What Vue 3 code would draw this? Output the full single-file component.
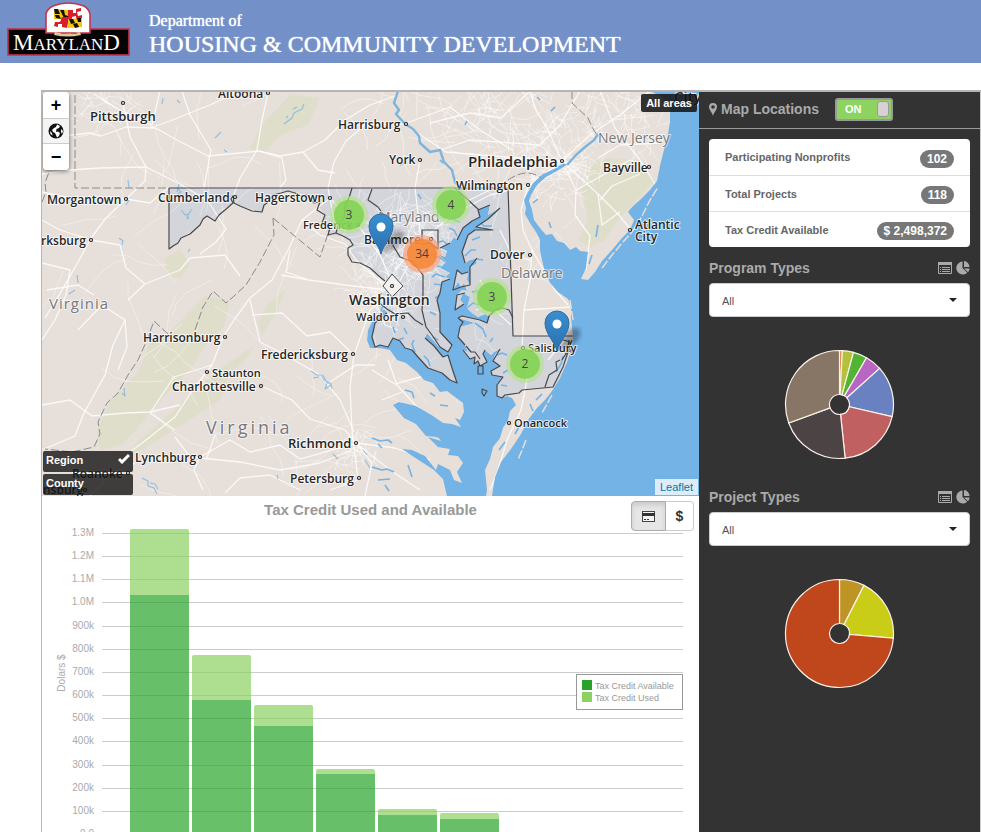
<script setup>
import { ref } from 'vue'

const land =
  'M42 91H650L662 97 670 108 670 122 668 134 664 150 660 166 657 181 650 190 640 200 632 207 628 212 634 220 630 230 622 238 612 250 602 261 595 272 588 280 581 279 586 268 588 252 580 251 576 247 570 250 564 243 557 241 552 234 546 235 540 228 534 220 532 210 529 201 531 195 537 185 546 177 557 171 567 165 L564 163 554 169 543 174 533 183 527 194 524 200 526 208 525 214 530 223 536 232 540 240 540 250 542 260 545 272 550 283 558 292 568 299 571 306 571 318 573 337 572 347 567 362 560 378 552 391 545 400 537 408 528 420 521 434 511 449 501 462 495 477 492 496H486L487 490 485 470 490 459 493 447 500 438 503 428 508 420 510 411 516 405 512 398 507 396 502 398 497 396 497 385 503 377 492 375 491 371 500 366 493 361 495 355 500 349 494 352 491 355 485 350 483 354 487 362 480 366 478 361 474 364 475 357 470 359 463 350 468 352 465 345 458 337 460 327 475 323 458 318 462 316 480 320 487 323 490 317 485 314 478 317 472 313 467 308 470 297 463 293 460 300 464 304 455 310 457 295 462 290 467 291 464 283 461 287 458 282 453 290 457 270 462 274 468 272 467 280 470 285 470 267 476 264 477 258 483 257 470 260 465 263 462 252 468 235 475 230 493 230 476 227 488 219 500 208 488 215 490 205 478 210 480 217 472 221 463 228 457 240 454 237 459 230 450 243 440 248 447 251 445 257 438 254 446 262 440 268 450 273 445 277 450 279 442 282 440 293 437 300 440 313 440 332 452 345 448 352 438 346 427 333 425 338 434 346 443 357 448 355 452 368 457 383 450 380 442 373 428 368 418 357 412 350 405 348 400 341 393 338 388 347 380 345 375 347 372 337 375 323 387 313 384 309 374 318 368 330 367 340 370 348 380 348 390 350 397 360 406 363 417 372 424 380 433 383 440 392 447 391 463 403 464 412 460 420 455 418 461 427 452 424 443 423 433 416 416 406 399 402 393 405 404 418 416 424 426 436 438 437 441 441 428 437 438 447 450 449 448 455 458 456 463 463 457 472 462 483 454 480 450 470 438 464 436 470 425 456 412 450 402 449 417 459 434 470 443 479 447 496H42Z'

const maryland =
  'M169 188H508L513 336H573L568 357 560 378 554 388 520 390 519 393 505 395 498 400 457 388 437 378 418 366 405 354 390 348 370 347 366 335 374 317 378 310 375 302 381 293 386 282 378 275 370 268 360 263 349 256 353 245 343 236 330 235 323 225 325 215 320 208 317 200 307 195 288 191 281 193 273 195 267 203 262 212 240 206 235 201 225 210 215 221 207 216 200 225 185 235 178 243 170 249Z'

const borders = [
  'M169 188H508L513 336H573M169 188V249L173 246 178 243 181 238 190 234 200 225 203 219 207 216 215 221 219 215 225 210 233 203 231 199 233 196 234 203 240 206 252 211 262 212 264 205 267 203 273 195 281 193 288 191 295 193 301 196 307 195 314 203 320 202 317 210 325 215 322 223 330 228 328 235 336 233 343 236 350 240 353 245 348 248 348 255 352 262 360 263 370 268 380 277 385 281',
  'M352 188L349 198 345 205 344 218 338 226 336 233M372 189L368 200 378 207 385 217 387 230 391 242 400 257 413 262 423 275 423 293 422 310 426 327 432 335 440 347',
  'M455 188L479 210M381 293L378 302 387 309 395 314 408 313 415 320 423 325M387 313L375 323 372 337 375 347 380 345 388 347 393 338 400 341 405 348 412 350 418 357 428 368 442 373 450 380 457 383 452 368 448 355 443 357 434 346 425 338',
  'M440 347L448 352 452 345 440 332 440 313 437 300 440 293 442 282 450 279',
  'M500 208L488 219 476 227 493 230H475L468 235 462 252 465 263M490 205L478 210 480 217 472 221 463 228 457 240M450 243L440 248M477 258L470 267V285L461 287 453 290 457 270 462 274 468 272',
  'M465 293L457 295 455 310 464 304M458 318L462 316 480 320 487 323 489 316 495 310 503 308 509 310 513 318M458 318L463 322 460 327 458 337 465 345',
  'M463 350L470 359 475 357 474 364 478 361 480 366 487 362 483 354 485 350 M500 349L493 361 500 366 491 371 492 375 503 377 497 385 497 396 502 398 505 395 519 393 522 390 553 387 563 367 572 340M478 366H483V374H478ZM482 389l5 2-3 5-2-3ZM545 387L549 375 557 370 556 362 560 360M563 340l8 2-5 5 7 3-8 3M466 346l5 6 4 0 5 7M569 340l-2 12-5 8',
  'M422 244V230H438V249L430 243Z'
]

const stateLines = [
  'M75 95V188H169',
  'M42 202L46 192 45 183 49 172M273 218L320 257 330 228M273 218L274 235 260 262 246 285 233 297 226 303 213 291 203 307 195 330',
  'M168 334L154 321 147 340 138 360 128 375 118 393 107 403 98 422 100 434 94 447 72 452 45 449',
  'M572 91L572 103 588 118 592 127 598 137M508 180Q527 167 541 178'
]

const parks = [
  'M205 296L230 300 224 327 205 345 190 370 166 394 148 416 123 444 100 450 97 430 110 402 138 372 150 342 165 337Z',
  'M255 345L245 360 230 375 220 400 180 426 150 445 120 463 140 440 170 414 190 395 215 372Z',
  'M285 290L275 315 262 335 258 322 268 304Z',
  'M588 165L608 158 630 160 655 180 640 197 618 220 605 240 590 248 578 240 588 220 582 190Z',
  'M164 258l16-8 10 14-10 15-13-4z',
  'M290 95L320 98 308 125 280 135 265 152 250 148 262 125Z'
]

const roads = [
  'M42 138L90 133 101 136 126 127 156 128 175 139 208 156 240 153 259 151 280 156 303 152 325 140 345 120 370 105 398 95',
  'M123 103L130 137 146 167 145 181 127 198 106 218 91 238 77 264 62 290 45 318',
  'M268 93L262 120 257 150 240 178 232 200',
  'M95 95L120 110 152 125 160 91M182 91L190 115 211 150 204 188',
  'M42 174L70 170 100 168 146 167 180 184 208 201 226 229 216 242 200 254',
  'M150 128L170 121 210 105 240 91M303 152L318 170 335 173M259 151L282 158 286 180 280 188',
  'M404 124L365 125 346 141 334 162 328 188 334 220',
  'M404 124L446 152 480 155 520 158 560 161M420 160L415 188 421 240 410 262 395 290',
  'M404 124L450 107 480 130 512 150M562 161L548 130 535 108 530 91',
  'M562 161L530 185 490 195 452 215 422 240 395 270M562 161L590 135 620 115 650 91',
  'M580 91L560 125 540 145 470 140 440 150M600 91L615 128 640 160 655 184M562 161L598 194 618 214 631 230',
  'M562 161L576 190 575 215 590 236 586 270M530 91L501 118 470 113 430 123',
  'M528 186L521 210 523 230 532 250 530 280 524 310 522 348 528 375 521 410 507 440 498 470 490 490',
  'M532 250L555 290 568 305M524 310L570 307',
  'M330 198L302 220 288 250 272 280 250 298 234 320 223 337 212 365 194 388 175 417 146 440 130 452',
  'M302 220L320 235 345 244 356 260 388 288M358 225L340 210 330 198M358 225L380 255 394 288',
  'M281 275L309 280 345 285 388 290M290 250L286 272 309 280M392 292L370 310 354 355 350 388 352 430 358 480',
  'M252 315L282 313 307 336 330 332 354 355M250 300L260 342 282 353 320 375 340 400 354 432',
  'M261 386L292 400 310 419 345 430 356 443M212 365L174 377 150 413 175 430',
  'M42 405L70 400 92 416 125 413 150 412 180 405M42 340L55 320 66 295 70 270 42 263',
  'M42 450L75 436 83 415 105 375 113 345 125 320 102 305 78 330',
  'M125 320L127 347 118 370M91 240L120 245 126 268 145 284 128 300M145 284L180 270 190 258 225 255 240 276',
  'M200 457L194 470 203 490M135 463L110 475 90 496M200 457L230 440 250 452 280 445 300 459 356 443',
  'M175 437L190 457 240 462 280 470 320 463 352 450M300 490L270 475 240 478 225 493M356 443L395 448 430 460',
  'M356 443L372 463 365 496M356 443L390 470 420 490M358 480L330 490M215 435L206 460M375 365L356 365 330 382',
  'M398 330L385 325 375 300M424 376L395 384 372 370M382 400L402 392M388 360L397 385 420 410 440 430',
  'M42 220L60 230 91 240M126 199L150 203 168 188M47 290L78 285 94 295M42 192L70 198 126 199',
  'M453 208L490 190M480 280L495 310 511 325M500 230L512 255 530 260M476 310L495 305M548 360L565 340',
  'M600 200L612 186 640 174M598 194L602 225 620 212M576 190L630 160 650 167M598 158L620 145 660 143'
]

const rivers = [
  'M567 165L576 155 585 147 594 140 598 134',
  'M398 91L394 103 399 110 396 114 405 124 413 129 419 136 420 143 430 152 440 150 444 162 452 170 455 182 462 190'
]

const creeks = [
  'M284 124l8-6 2-5 8-4 2-5M286 118l2-2M293 109l4-2M215 138l6-6M224 150l3 2M163 98l-1 6M180 103l-3-3M128 180l1 8M126 205l3-5M177 188l4 4-3 2M181 210l4 5 3-1-1 5 2-2M192 209l-4 6M119 238l4 3-1 4M188 252l2-3M77 275l1 8M75 290l-6 4M179 184l-2 8',
  'M311 371l6 4 4 0 3 5 7 4 1 5M323 375l4 8-2 6 6-4M313 378l6-1M124 388l1 8-3-3M142 478l6 3 0 5 6 2 3 6M150 483l5 1 3 5M277 475l1 4M333 454l5 5M363 450l4 5M365 460l5 8'
]

const inlets = [
  'M398 340l6-2M405 390l7 2 2 6M430 435l8 2M372 438l8 3 8-1 4 3M378 444l4 4M440 405l8 1M430 393l5 3M372 467l10 3 5-1 7 3M378 480l12-1M408 465l4 12M385 485l4 6',
  'M400 165l5-3M440 160l3 3M418 194l3 5M465 125l2-4M537 97l3 3M555 107l-4 4M551 228l-2-6M538 199l-5 4M598 225l-2 12M592 255l-3 9M384 303l-3 8M395 333l-2-6M404 328l3 6M415 352l-3-8 2-4M430 366l-2-6-4-4M457 236l-3-6-5-2M460 222l-6-2M448 245l-5-4-4 1M446 262l-7-5-5 0M446 268l-9-2M445 277l-9-3-4 3M441 285l-7-1M440 295l-5 3M470 262l7-3 6 1M465 256l6-6 5 0M472 240l8-3M480 222l4 4 8 0M472 292l5-1 3 4M467 308l6-5 6 2M475 323l8 6 3 8M480 320l7-1M490 342l3-4M497 355l5-2 5 2M503 373l5-3M501 385l6 1M556 372l5-8 2-8M536 400l6-6M530 404l3 7M520 425l-5 9M505 442l-6 8M436 315l-6-3M438 340l-5-3'
]

// Street grids around the larger cities, grown from a fixed seed.
let seed = 7
const rnd = () => ((seed = (seed * 16807) % 2147483647) / 2147483647)
function streets(cx, cy, radius, count) {
  let d = ''
  for (let i = 0; i < count; i++) {
    const a = rnd() * Math.PI * 2
    const r = Math.pow(rnd(), 0.8) * radius
    let x = cx + Math.cos(a) * r
    let y = cy + Math.sin(a) * r
    let dir = rnd() * Math.PI * 2
    d += `M${x.toFixed(1)} ${y.toFixed(1)}`
    for (let k = 0; k < 4; k++) {
      dir += rnd() - 0.5
      x += Math.cos(dir) * radius * 0.13
      y += Math.sin(dir) * radius * 0.13
      d += `L${x.toFixed(1)} ${y.toFixed(1)}`
    }
  }
  return d
}
const fine = [
  [562, 161, 42, 130], [392, 284, 40, 120], [420, 240, 34, 90], [356, 450, 22, 50],
  [105, 100, 40, 40], [500, 120, 60, 50], [620, 110, 45, 60], [385, 235, 60, 60], [450, 130, 90, 50]
].map((h) => streets(...h)).join('')
const rural = [
  [120, 260, 110, 16], [250, 400, 130, 20], [200, 140, 110, 16], [540, 250, 40, 12], [360, 410, 80, 14], [480, 340, 50, 10]
].map((h) => streets(...h)).join('')

// name, x, baseline, size, dot x, dot y
const cities = [
  ['Altoona', 218, 98, 12, 268, 93], ['Pittsburgh', 90, 121, 13, 123, 103], ['Harrisburg', 338, 129, 12, 406, 124],
  ['York', 389, 164, 12, 420, 160], ['Philadelphia', 468, 167, 15, 562, 161], ['Bayville', 603, 172, 12, 649, 167],
  ['Wilmington', 456, 190, 12, 528, 185], ['Morgantown', 47, 204, 12, 126, 199], ['Cumberland', 158, 202, 12, 235, 197],
  ['Hagerstown', 255, 202, 12, 330, 198], ['Frederick', 303, 229, 11, 358, 225], ['Baltimore', 364, 244, 12, 431, 239],
  ['rksburg', 41, 245, 12, 91, 240], ['Atlantic', 635, 229, 12, 630, 230], ['City', 635, 241, 12],
  ['Dover', 490, 259, 12, 530, 255], ['Washington', 349, 305, 14, 392, 286], ['Waldorf', 356, 321, 11, 403, 317],
  ['Harrisonburg', 143, 342, 12, 225, 337], ['Fredericksburg', 261, 359, 12, 353, 354], ['Staunton', 212, 377, 11, 207, 372],
  ['Charlottesville', 172, 391, 12, 261, 386], ['Richmond', 288, 448, 13, 356, 443], ['Petersburg', 290, 483, 12, 359, 478],
  ['Lynchburg', 135, 462, 12, 200, 457], ['Roanoke', 72, 478, 12, 128, 473], ['nsburg', 43, 494, 12, 85, 490],
  ['Salisbury', 528, 352, 11, 523, 348], ['Onancock', 514, 427, 11, 509, 423], ['City', 674, 102, 15]
]
const states = [
  ['New Jersey', 598, 143, 14], ['Maryland', 378, 222, 14], ['Delaware', 501, 278, 14]
]
const clusters = [
  ['3', 349, 215], ['4', 451, 205], ['34', 422, 254, true], ['3', 492, 297], ['2', 525, 364]
]
const pins = [[381, 254], [557, 351]]

const base = 834
const tickStep = 23.16
const ticks = ['0.0', '100k', '200k', '300k', '400k', '500k', '600k', '700k', '800k', '900k', '1.0M', '1.1M', '1.2M', '1.3M']
const tickY = (i) => Math.round(base - i * tickStep)
// total top and available top, in thousands of dollars
const bars = [[1317, 1032], [773, 579], [557, 466], [281, 259], [108, 82], [91, 65]]
const valY = (v) => Math.round(base - (v / 100) * tickStep)
const barTop = (x, y, bottom) => `M${x} ${bottom}V${y + 2}Q${x} ${y} ${x + 2} ${y}H${x + 57}Q${x + 59} ${y} ${x + 59} ${y + 2}V${bottom}Z`

function donut(slices) {
  let from = 0
  return slices.map(([to, color]) => {
    const pt = (deg, r) => {
      const a = (deg * Math.PI) / 180
      return `${(Math.sin(a) * r).toFixed(2)} ${(-Math.cos(a) * r).toFixed(2)}`
    }
    const big = to - from > 180 ? 1 : 0
    const d = `M${pt(from, 54)}A54 54 0 ${big} 1 ${pt(to, 54)}L${pt(to, 10)}A10 10 0 ${big} 0 ${pt(from, 10)}Z`
    from = to
    return { d, color }
  })
}
const groups = [
  {
    id: 'program', title: 'Program Types',
    slices: donut([[3, '#dd7a3a'], [15, '#b4c13e'], [30, '#53b332'], [48, '#b965c3'], [103, '#6981c0'], [174, '#c06061'], [250, '#4c4444'], [360, '#877566']])
  },
  {
    id: 'project', title: 'Project Types',
    slices: donut([[27, '#be9424'], [95, '#cacd18'], [360, '#c0471b']])
  }
]
const stats = [['Participating Nonprofits', '102'], ['Total Projects', '118'], ['Tax Credit Available', '$ 2,498,372']]
const locationsOn = ref(true)
const chosen = ref({ program: 'All', project: 'All' })
</script>

<template>
  <div class="page">
    <header class="banner">
      <svg class="logo" width="124" height="54" viewBox="7 2 124 54" role="img" aria-label="Maryland">
        <rect x="8" y="29" width="121" height="26" fill="#050304" stroke="#c2344b" stroke-width="1.6" />
        <path d="M46 33V14Q47 9 53 6Q68 0 84 6Q89 9 90 14V33Z" fill="#fff" stroke="#c2344b" stroke-width="1.6" />
        <g>
          <path d="M54 9l14 1v9l-14 0z" fill="#f0c419" />
          <path d="M54 9l4 0 2 5h-5zM60 10h4l1 5 3 1v3l-4-1zM55 15l4 0 2 4-5-1z" fill="#15110a" />
          <path d="M68 10l13-2 1 9-14 2z" fill="#fff" />
          <path d="M68 10l5 0v3l3 0 0-4 5-1 0 3-4 1 1 4 4-1v3l-6 1 0-3-4 1v2h-4z" fill="#d3202c" />
          <path d="M54 19l14 0v9l-13-1z" fill="#fff" />
          <path d="M62 17h8v3l4 1v3l-6-1-1 5-5-1 0-3-4 0v3l-4-1 1-4 5 0z" fill="#d3202c" />
          <path d="M68 19l14-1v9l-14 1z" fill="#f0c419" />
          <path d="M69 19h4l2 4-4 1zM77 18l4 0 0 4-3 0zM73 24l4-1 2 4-4 1z" fill="#15110a" />
        </g>
        <path d="M55 32q12 3 25 0l1 3q-13 3-27 0z" fill="#dcc896" />
        <path d="M61 33.500h6m4 0h6" stroke="#8c7648" stroke-width="1" />
        <text x="13" y="50" class="logo-text" font-size="23">M<tspan font-size="17">ARYLAN</tspan>D</text>
      </svg>
      <div class="banner-text">
        <span class="dept">Department of</span>
        <h1>HOUSING &amp; COMMUNITY DEVELOPMENT</h1>
      </div>
    </header>

    <main class="dashboard">
      <section class="content">
        <div class="map">
          <svg class="map-art" viewBox="42 92 657 404" preserveAspectRatio="xMidYMid slice">
            <defs>
              <clipPath id="land-clip"><path :d="land" /></clipPath>
              <linearGradient id="pin-fill" x1="0" y1="0" x2="0" y2="1">
                <stop offset="0" stop-color="#3a8fd0" /><stop offset="1" stop-color="#2a6fae" />
              </linearGradient>
              <filter id="soft"><feGaussianBlur stdDeviation="2" /></filter>
            </defs>
            <rect x="42" y="91" width="657" height="405" fill="#73b3e6" />
            <path :d="land" fill="#e7dfd9" />
            <g clip-path="url(#land-clip)">
              <path v-for="p in parks" :key="p" :d="p" fill="#dfdecb" />
              <path :d="maryland" fill="#d3d5da" />
              <path :d="rural" class="rural" />
              <path :d="fine" class="fine" />
              <path v-for="r in roads" :key="r" :d="r" class="road" />
              <path v-for="c in creeks" :key="c" :d="c" class="creek" />
              <path v-for="c in inlets" :key="c" :d="c" class="inlet" />
            </g>
            <path d="M602 268L612 255 623 242 632 232 641 218 650 200 658 187M526 440l-8 20M552 395l-10 18M570 300l3 20" class="barrier" />
            <path v-for="r in rivers" :key="r" :d="r" class="river" />
            <path v-for="s in stateLines" :key="s" :d="s" class="state-line" />
            <path v-for="b in borders" :key="b" :d="b" class="border" />
            <path d="M392 274L403 286 392 297 383 286Z" fill="#f4f1ef" stroke="#47494e" stroke-width="1" />
            <text v-for="s in states" :key="s[0]" :x="s[1]" :y="s[2]" :font-size="s[3]" class="state">{{ s[0] }}</text>
            <text x="49" y="309" font-size="15" class="state wide">Virginia</text>
            <text x="206" y="434" font-size="18" class="state wider">Virginia</text>
            <g v-for="(c, i) in cities" :key="i">
              <text :x="c[1]" :y="c[2]" :font-size="c[3]" class="city">{{ c[0] }}</text>
              <circle v-if="c[4]" :cx="c[4]" :cy="c[5]" r="1.500" class="dot" />
            </g>
            <g v-for="(c, i) in clusters" :key="'c' + i">
              <circle :cx="c[1]" :cy="c[2]" r="19" :fill="c[3] ? '#fd9c73' : '#b5e28c'" opacity=".65" />
              <circle :cx="c[1]" :cy="c[2]" r="15" :fill="c[3] ? '#f5832c' : '#7ad24a'" opacity=".8" />
              <text :x="c[1]" :y="c[2] + 4" class="count">{{ c[0] }}</text>
            </g>
            <g v-for="p in pins" :key="p[0]" :transform="`translate(${p[0]} ${p[1]})`">
              <path d="M0 0L8-15Q12-26 22-22Q26-16 18-8Z" fill="#000" opacity=".3" filter="url(#soft)" />
              <path d="M0 0C-2-9-12-17-12-28A12 12 0 0 1 12-28C12-17 2-9 0 0Z" fill="url(#pin-fill)" stroke="#2c6da5" stroke-width="1" />
              <circle cx="0" cy="-27" r="4.500" fill="#fff" />
            </g>
          </svg>

          <div class="zoom">
            <button type="button" aria-label="Zoom in">+</button>
            <button type="button" aria-label="Full extent" class="home">
              <svg width="16" height="16" viewBox="0 0 16 16">
                <circle cx="8" cy="8" r="7.500" fill="#111" />
                <path d="M9 1.500L12 3 11 5 8.500 6 8 9 10 8.500 12 10 11 13 9 14.500 8 12 7 10 5 9 4 7 6 5 8 4ZM13 6L15 8 14 11 13 9ZM2 8L4 10 4.500 12.500 2.500 11Z" fill="#fff" />
              </svg>
            </button>
            <button type="button" aria-label="Zoom out">−</button>
          </div>
          <div class="area-tag">All areas</div>
          <div class="layers">
            <button type="button">Region
              <svg width="12" height="10" viewBox="0 0 12 10"><path d="M1 5L4 8 11 1" fill="none" stroke="#fff" stroke-width="3" /></svg>
            </button>
            <button type="button">County</button>
          </div>
          <a class="credit" href="#">Leaflet</a>
        </div>

        <div class="chart">
          <div class="chart-head">
            <h2>Tax Credit Used and Available</h2>
            <div class="toggle">
              <button type="button" class="on" aria-label="Card view">
                <svg width="13" height="11" viewBox="0 0 13 11">
                  <rect x=".5" y=".5" width="12" height="10" fill="#f4f4f4" stroke="#444" />
                  <path d="M0 2H13V5H0Z" fill="#333" /><path d="M2 8.500H4M5 8.500H7" stroke="#333" />
                </svg>
              </button>
              <button type="button">$</button>
            </div>
          </div>
          <svg class="plot" viewBox="42 520 657 324" role="img" aria-label="Stacked bar chart of tax credits">
            <g v-for="(t, i) in ticks" :key="t">
              <path :d="`M102 ${tickY(i)}.5H683`" stroke="#ccc" />
              <text x="94" :y="tickY(i) + 3" class="tick">{{ t }}</text>
            </g>
            <g v-for="(b, i) in bars" :key="i" opacity=".7">
              <path :d="barTop(130 + i * 62, valY(b[0]), valY(b[1]))" fill="#8cd263" />
              <rect :x="130 + i * 62" :y="valY(b[1])" width="59" :height="base - valY(b[1])" fill="#28a62a" />
            </g>
            <text class="axis" transform="translate(65 673) rotate(-90)">Dolars $</text>
            <rect x="576.500" y="674.500" width="106" height="35" fill="#fff" stroke="#999" />
            <rect x="582" y="680" width="10" height="10" fill="#28a228" />
            <rect x="582" y="692" width="10" height="10" fill="#8cd263" />
            <text x="595" y="689" class="key">Tax Credit Available</text>
            <text x="595" y="701" class="key">Tax Credit Used</text>
          </svg>
        </div>
      </section>

      <aside class="side">
        <div class="side-head">
          <svg width="8" height="13" viewBox="0 0 8 13"><path fill-rule="evenodd" d="M4 0A4 4 0 0 1 8 4C8 7 5 9 4 13C3 9 0 7 0 4A4 4 0 0 1 4 0ZM4 2.200A1.800 1.800 0 1 0 4 5.800A1.800 1.800 0 1 0 4 2.200Z" fill="#aaa" /></svg>
          <label for="locations">Map Locations</label>
          <span class="switch" :class="{ off: !locationsOn }">
            <input id="locations" v-model="locationsOn" type="checkbox" role="switch">
            <span>{{ locationsOn ? 'ON' : 'OFF' }}</span>
            <i></i>
          </span>
        </div>
        <ul class="stats">
          <li v-for="s in stats" :key="s[0]"><span>{{ s[0] }}</span><b>{{ s[1] }}</b></li>
        </ul>
        <section v-for="g in groups" :key="g.id" class="group">
          <div class="group-head">
            <label :for="g.id">{{ g.title }}</label>
            <button type="button" aria-label="List view">
              <svg width="14" height="12" viewBox="0 0 14 12">
                <path d="M.5 1V11.500H13.500V1Z" fill="none" stroke="#aaa" /><path d="M0 0H14V3H0Z" fill="#aaa" />
                <path d="M2 5.500H3M4 5.500H12M2 7.500H3M4 7.500H12M2 9.500H3M4 9.500H12" stroke="#aaa" />
              </svg>
            </button>
            <button type="button" aria-label="Pie view">
              <svg width="14" height="14" viewBox="0 0 14 14">
                <path d="M6.500 .5A6.500 6.500 0 1 0 11.200 11.800L6.500 7Z" fill="#aaa" />
                <path d="M8 0A6 6 0 0 1 13.500 6H8ZM8 7.500H13.500Q13.500 9.500 12 11.200Z" fill="#aaa" />
              </svg>
            </button>
          </div>
          <div class="select">
            <select :id="g.id" v-model="chosen[g.id]"><option>All</option></select>
          </div>
          <svg class="pie" width="111" height="111" viewBox="-55.500 -55.500 111 111" role="img" :aria-label="g.title">
            <path v-for="s in g.slices" :key="s.color" :d="s.d" :fill="s.color" stroke="#fbf3ea" stroke-width="1.200" />
          </svg>
        </section>
      </aside>
    </main>
  </div>
</template>

<style>
body { background: #fff; }
</style>

<style scoped>
* { box-sizing: border-box; }
.page {
  display: flex;
  flex-direction: column;
  height: 100vh;
  overflow: hidden;
  font-family: "Liberation Sans", Arial, sans-serif;
}
button { font-family: inherit; cursor: pointer; }
.banner {
  display: flex;
  flex: none;
  gap: 18px;
  height: 63px;
  padding: 2px 7px;
  background: #7391c8;
  color: #fff;
  font-family: "Liberation Serif", "Times New Roman", serif;
}
.logo-text { font-family: "Liberation Serif", serif; fill: #fff; }
.banner-text { padding-top: 10px; }
.dept { display: block; font-size: 16px; line-height: 18px; text-shadow: 0 0 1px #fff; }
h1 { margin: 0; font-size: 24px; line-height: 28px; font-weight: 400; white-space: nowrap; text-shadow: 0 0 1px #fff; }

.dashboard {
  display: grid;
  grid-template-columns: minmax(0, 1fr) 282px;
  flex: 1;
  min-height: 0;
  margin: 27px 0 0 41px;
  border-top: 2px solid #b5b5b5;
  border-left: 1px solid #b5b5b5;
}
.content { display: flex; flex-direction: column; min-height: 0; overflow: hidden; }

.map { position: relative; flex: none; height: 404px; overflow: hidden; }
.map-art { display: block; width: 100%; height: 100%; font-family: "Open Sans", "Noto Sans", sans-serif; }
.road, .fine, .rural, .creek, .inlet, .river, .border, .state-line, .barrier { fill: none; stroke-linejoin: round; }
.road { stroke: #fff; stroke-width: 1.3; opacity: .8; }
.fine { stroke: #fff; stroke-width: 0.7; opacity: .65; }
.rural { stroke: #fff; stroke-width: 0.8; opacity: .5; }
.creek { stroke: #73b3e6; stroke-width: 1.1; opacity: .75; }
.inlet { stroke: #73b3e6; stroke-width: 1.6; }
.river { stroke: #7fb4dd; stroke-width: 2.4; }
.barrier { stroke: #e7dfd9; stroke-width: 1.5; stroke-dasharray: 9 2; }
.state-line { stroke: #8b8b88; stroke-width: 1; stroke-dasharray: 8 3; }
.border { stroke: #47494e; stroke-width: 1.2; }
.city { fill: #262626; font-weight: 600; paint-order: stroke; stroke: #fff; stroke-opacity: .75; stroke-width: 2px; stroke-linejoin: round; }
.state { fill: #77797c; paint-order: stroke; stroke: #fff; stroke-opacity: .6; stroke-width: 2px; }
.wide { letter-spacing: 1px; }
.wider { letter-spacing: 3px; }
.dot { fill: #fff; stroke: #222; stroke-width: 1.2; }
.count { font-size: 12px; text-anchor: middle; fill: #444; }

.zoom {
  position: absolute;
  top: 0;
  left: 1px;
  display: flex;
  flex-direction: column;
  width: 26px;
  overflow: hidden;
  background: #fff;
  border-radius: 4px;
  box-shadow: 0 1px 4px rgba(0, 0, 0, .6);
}
.zoom button {
  display: flex;
  align-items: center;
  justify-content: center;
  height: 26px;
  padding: 0;
  border: 0;
  background: #fff;
  color: #000;
  font-size: 18px;
  font-weight: 700;
}
.zoom .home { background: #f4f4f4; border: solid #ccc; border-width: 1px 0; }
.area-tag {
  position: absolute;
  top: 2px;
  right: 2px;
  padding: 0 5px;
  border-radius: 2px;
  background: rgba(20, 20, 20, .86);
  color: #fff;
  font-size: 11px;
  font-weight: 700;
  line-height: 18px;
}
.layers { position: absolute; left: 1px; bottom: 1px; display: grid; gap: 2px; width: 90px; }
.layers button {
  display: flex;
  justify-content: space-between;
  height: 21px;
  padding: 3px;
  border: 0;
  border-radius: 2px;
  background: rgba(20, 20, 20, .8);
  color: #fff;
  font-size: 11px;
  font-weight: 700;
  line-height: 13px;
}
.credit {
  position: absolute;
  right: 1px;
  bottom: 1px;
  padding: 0 5px;
  background: rgba(255, 255, 255, .75);
  color: #0078a8;
  font-size: 11px;
  line-height: 16px;
  text-decoration: none;
}

.chart-head { position: relative; height: 24px; padding-top: 4px; text-align: center; }
h2 { margin: 0; color: #999; font-size: 15px; line-height: 20px; }
.toggle { position: absolute; top: 5px; right: 5px; z-index: 1; display: flex; }
.toggle button {
  display: flex;
  align-items: center;
  justify-content: center;
  width: 28px;
  height: 30px;
  padding: 0;
  border: 1px solid #ccc;
  border-left: 0;
  border-radius: 0 4px 4px 0;
  background: #fff;
  color: #333;
  font-size: 14px;
  font-weight: 700;
}
.toggle .on { width: 35px; border: 1px solid #adadad; border-radius: 4px 0 0 4px; background: #e6e6e6; box-shadow: inset 0 3px 5px rgba(0, 0, 0, .12); }
.plot { display: block; width: 100%; }
.tick { fill: #aaa; font-size: 10px; text-anchor: end; }
.axis { fill: #aaa; font-size: 10px; text-anchor: middle; }
.key { fill: #999; font-size: 9px; }

.side { overflow: hidden; background: #333; color: #aaa; border-right: 1px solid #ccc; }
.side-head {
  display: flex;
  align-items: center;
  gap: 4px;
  height: 37px;
  padding: 0 10px 2px;
  border-bottom: 1px solid #999;
  font-size: 14px;
  font-weight: 700;
}
.switch {
  position: relative;
  display: flex;
  align-items: center;
  justify-content: space-between;
  width: 58px;
  height: 23px;
  margin-left: 12px;
  padding: 0 2px 0 8px;
  border: 2px solid #999;
  border-radius: 3px;
  background: #8cd45f;
  color: #fff;
  font-size: 11px;
}
.switch.off { background: #777; }
.switch input { position: absolute; inset: 0; width: 100%; height: 100%; margin: 0; opacity: 0; cursor: pointer; }
.switch i { width: 12px; height: 16px; border: 1px solid #999; border-radius: 3px; background: #d9d0d3; }
.stats { margin: 10px 10px 0; padding: 0; list-style: none; background: #fff; border-radius: 4px; color: #666; }
.stats li {
  display: flex;
  align-items: center;
  justify-content: space-between;
  height: 36px;
  padding: 0 16px;
  font-size: 11px;
  font-weight: 700;
}
.stats li + li { border-top: 1px solid #ddd; }
.stats b { margin-top: 3px; padding: 0 7px; border-radius: 9px; background: #777; color: #fff; font-size: 12px; line-height: 18px; }
.group { padding: 12px 10px 0; }
.group + .group { padding-top: 28px; }
.group-head { display: flex; align-items: center; gap: 4px; height: 18px; margin-bottom: 6px; font-size: 14px; font-weight: 700; }
.group-head label { flex: 1; }
.group-head button { display: flex; padding: 0; border: 0; background: none; }
.select { position: relative; }
.select::after {
  position: absolute;
  top: 15px;
  right: 13px;
  border: solid transparent;
  border-width: 4px 4px 0;
  border-top-color: #222;
  content: "";
  pointer-events: none;
}
.select select {
  display: block;
  width: 100%;
  height: 34px;
  padding: 1px 12px 0;
  border: 1px solid #ccc;
  border-radius: 4px;
  background: #fff;
  color: #555;
  font: 11px "Liberation Sans", Arial, sans-serif;
  appearance: none;
}
.pie { display: block; margin: 32px auto 0; }
</style>
